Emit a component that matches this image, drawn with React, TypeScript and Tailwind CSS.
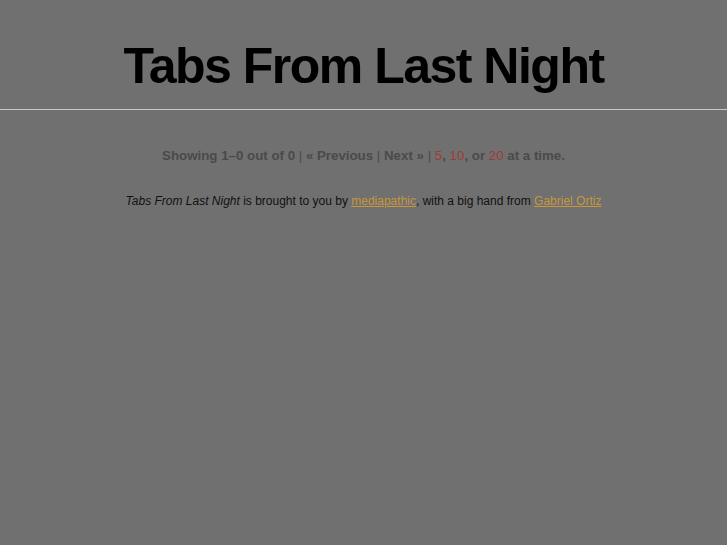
import React from "react";

const Pager = () => (
  <p className="text-center text-[13.3px] font-bold text-[#4a4a4a]">
    Showing 1–0 out of 0 <span className="font-normal">|</span> « Previous{" "}
    <span className="font-normal">|</span> Next »{" "}
    <span className="font-normal">|</span>{" "}
    <span className="font-normal text-[#a03a35]">5</span>,{" "}
    <span className="font-normal text-[#a03a35]">10</span>, or{" "}
    <span className="font-normal text-[#a03a35]">20</span> at a time.
  </p>
);

const Credits = () => (
  <p className="text-center text-[12px] text-[#111]">
    <em>Tabs From Last Night</em> is brought to you by{" "}
    <a href="#" className="text-[#c8963c] underline">
      mediapathic
    </a>
    , with a big hand from{" "}
    <a href="#" className="text-[#c8963c] underline">
      Gabriel Ortiz
    </a>
  </p>
);

export default function App() {
  return (
    <main className="min-h-[545px] bg-[#707070] font-['Liberation_Sans',Arial,sans-serif]">
      <header className="border-b border-[#c8c8c8] pt-[34px] pb-[11px]">
        <h1 className="text-center text-[50px] leading-[64px] font-bold tracking-[-1.5px] text-black">
          Tabs From Last Night
        </h1>
      </header>
      <div className="pt-[36px]">
        <Pager />
      </div>
      <div className="pt-[26px]">
        <Credits />
      </div>
    </main>
  );
}
